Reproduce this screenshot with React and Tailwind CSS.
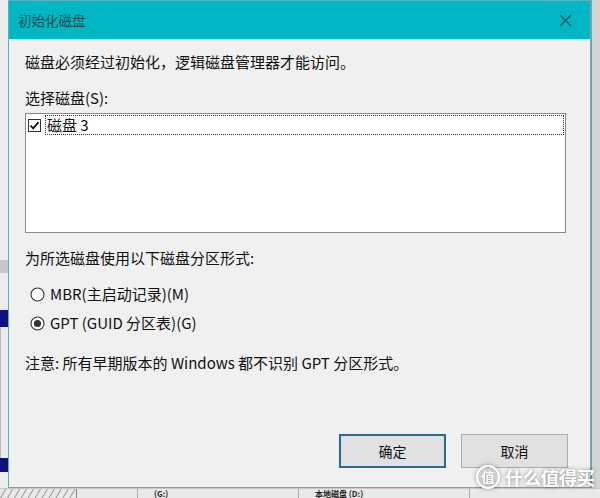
import React from "react";

const FONT = { fontFamily: '"Microsoft YaHei", "Noto Sans CJK SC", "Noto Sans", sans-serif' };

function Radio({ checked }) {
  return (
    <svg width="15" height="15" viewBox="0 0 15 15" className="shrink-0">
      <circle cx="7.5" cy="7.5" r="6.5" fill="#fff" stroke="#333" strokeWidth="1.1" />
      {checked && <circle cx="7.5" cy="7.5" r="3.6" fill="#333" />}
    </svg>
  );
}

export default function App() {
  return (
    <div className="relative w-[600px] h-[498px] overflow-hidden bg-[#e6e6e6] flex flex-col" style={FONT}>
      <div className="flex h-[488px]">
        {/* left background strip */}
        <div className="w-[8px] flex flex-col bg-[#ececec]">
          <div className="h-[260px]" />
          <div className="h-[13px] bg-[#c8c8c8]" />
          <div className="h-[37px]" />
          <div className="h-[17px] bg-[#101080]" />
          <div className="h-[131px] border-l border-[#bdbdbd]" />
          <div className="h-[14px] bg-[#101080]" />
          <div className="flex-1" />
        </div>
        {/* dialog */}
        <div className="w-[583px] flex flex-col border border-[#4fb5c0] bg-[#f0f0f0]">
          <div className="h-[38px] bg-[#00b7c3] flex items-center justify-between pl-[9px] pr-[18px]">
            <span className="text-[13.5px] text-[#1d4b52]">初始化磁盘</span>
            <svg width="13" height="13" viewBox="0 0 13 13">
              <path d="M1 1 L12 12 M12 1 L1 12" stroke="#1f4f5a" strokeWidth="1.3" />
            </svg>
          </div>
          <div className="flex-1 flex flex-col pl-[16px] pr-[22px] text-[15px] leading-[20px] text-[#111]">
            <div className="mt-[13px]">磁盘必须经过初始化，逻辑磁盘管理器才能访问。</div>
            <div className="mt-[16px]">选择磁盘(S):</div>
            <div className="mt-[5px] w-[541px] h-[120px] bg-white border border-[#8a8a8a] pt-[1px] pl-[2px] pr-[1px]">
              <div className="flex items-center h-[20px]">
                <div className="w-[13px] h-[13px] border border-[#333] bg-white flex items-center justify-center shrink-0">
                  <svg width="11" height="11" viewBox="0 0 11 11">
                    <path d="M1.5 5.5 L4.2 8.3 L9.5 2.2" fill="none" stroke="#111" strokeWidth="1.8" />
                  </svg>
                </div>
                <div className="ml-[4px] flex-1 h-[20px] border border-dotted border-[#333] flex items-center pl-[1px]">
                  磁盘 3
                </div>
              </div>
            </div>
            <div className="mt-[15px]">为所选磁盘使用以下磁盘分区形式:</div>
            <div className="mt-[16px] flex items-center gap-[5px] pl-[5px]">
              <Radio />
              <span>MBR(主启动记录)(M)</span>
            </div>
            <div className="mt-[9px] flex items-center gap-[5px] pl-[5px]">
              <Radio checked />
              <span>GPT (GUID 分区表)(G)</span>
            </div>
            <div className="mt-[20px]">注意: 所有早期版本的 Windows 都不识别 GPT 分区形式。</div>
            <div className="mt-[61px] flex justify-end gap-[15px] text-[14px]">
              <button className="w-[107px] h-[34px] bg-[#e1e1e1] border-2 border-[#2a6a8c] flex items-center justify-center text-[#111]">
                确定
              </button>
              <button className="w-[107px] h-[34px] bg-[#e1e1e1] border border-[#adadad] flex items-center justify-center text-[#111]">
                取消
              </button>
            </div>
          </div>
        </div>
        {/* right background strip */}
        <div className="flex-1 bg-[#d4d4d4] border-l border-[#8a9a9c]" />
      </div>
      {/* bottom background strip */}
      <div className="flex-1 flex items-center bg-[#e9e9e9] border-t border-[#c8c8c8] overflow-hidden text-[8px] leading-[8px] font-bold text-[#222]">
        <div className="w-[76px] h-full bg-[repeating-linear-gradient(120deg,#e9e9e9_0px,#e9e9e9_4px,#9a9a9a_5px,#e9e9e9_6px)]" />
        <div className="w-[1px] h-full bg-[#888]" />
        <div className="w-[60px]" />
        <div className="w-[1px] h-full bg-[#aaa]" />
        <div className="w-[160px] pl-[16px]">(G:)</div>
        <div className="w-[1px] h-full bg-[#aaa]" />
        <div className="w-[170px] pl-[16px]">本地磁盘 (D:)</div>
        <div className="w-[1px] h-full bg-[#aaa]" />
        <div className="flex-1" />
      </div>
      {/* watermark overlay */}
      <div className="absolute left-[476px] top-[465px] flex items-center gap-[5px] text-white leading-[24px] drop-shadow-[0_0_2px_rgba(0,0,0,0.45)] pointer-events-none">
        <div className="w-[24px] h-[24px] rounded-full border-2 border-white flex items-center justify-center text-[13px] leading-[14px] font-bold">值</div>
        <span className="text-[18px] leading-[24px] font-bold">什么值得买</span>
      </div>
    </div>
  );
}
